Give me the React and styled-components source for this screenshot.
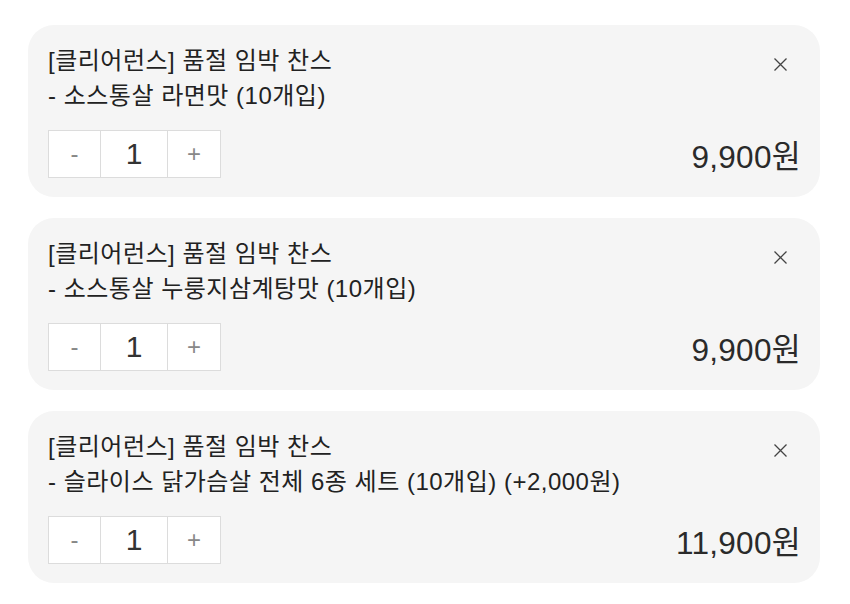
import React from "react";
import styled, { createGlobalStyle } from "styled-components";

const Global = createGlobalStyle`
  html, body { margin: 0; padding: 0; background: #fff; }
  body { font-family: "Noto Sans CJK KR", "Noto Sans", sans-serif; color: #222; }
`;

const List = styled.div`
  display: flex;
  flex-direction: column;
  gap: 21px;
  padding: 25px 30px 0 28px;
`;

const Card = styled.div`
  background: #f5f5f5;
  border-radius: 26px;
  height: 172px;
  box-sizing: border-box;
  padding: 18px 32px 19px 20px;
  display: flex;
  flex-direction: column;
  justify-content: space-between;
`;

const Top = styled.div`
  display: flex;
  justify-content: space-between;
  align-items: flex-start;
`;

const Title = styled.div`
  font-size: 24px;
  line-height: 35px;
  color: #222;
  letter-spacing: 0.5px;
  font-family: "Liberation Sans", "Noto Sans CJK KR", sans-serif;
`;

const Close = styled.button`
  border: none;
  background: none;
  padding: 0;
  margin-top: 13px;
  width: 16px;
  height: 16px;
  display: flex;
  align-items: center;
  justify-content: center;
`;

const Bottom = styled.div`
  display: flex;
  justify-content: space-between;
  align-items: center;
`;

const Qty = styled.div`
  display: flex;
  height: 48px;
  border: 1px solid #dcdcdc;
  background: #fff;
  box-sizing: border-box;
`;

const QtyBtn = styled.div`
  width: ${(p) => p.$w}px;
  display: flex;
  align-items: center;
  justify-content: center;
  font-size: ${(p) => (p.$num ? 30 : 24)}px;
  color: ${(p) => (p.$num ? "#333" : "#888")};
  font-family: "Liberation Sans", sans-serif;
  border-left: ${(p) => (p.$first ? "none" : "1px solid #dcdcdc")};
  box-sizing: border-box;
`;

const Price = styled.div`
  font-size: 31.5px;
  color: #2a2a2a;
  letter-spacing: 0.3px;
  font-family: "Liberation Sans", "Noto Sans CJK KR", sans-serif;
  margin-right: -13px;
`;

const XIcon = () => (
  <svg width="15" height="15" viewBox="0 0 15 15">
    <path d="M1.5 1.5 L13.5 13.5 M13.5 1.5 L1.5 13.5" stroke="#444" strokeWidth="1.3" fill="none" />
  </svg>
);

const items = [
  { name: "- 소스통살 라면맛 (10개입)", price: "9,900원" },
  { name: "- 소스통살 누룽지삼계탕맛 (10개입)", price: "9,900원" },
  { name: "- 슬라이스 닭가슴살 전체 6종 세트 (10개입) (+2,000원)", price: "11,900원" },
];

export default function App() {
  return (
    <>
      <Global />
      <List>
        {items.map((it, i) => (
          <Card key={i}>
            <Top>
              <Title>
                [클리어런스] 품절 임박 찬스
                <br />
                {it.name}
              </Title>
              <Close aria-label="삭제">
                <XIcon />
              </Close>
            </Top>
            <Bottom>
              <Qty>
                <QtyBtn $w={51} $first>-</QtyBtn>
                <QtyBtn $w={67} $num>1</QtyBtn>
                <QtyBtn $w={53}>+</QtyBtn>
              </Qty>
              <Price>{it.price}</Price>
            </Bottom>
          </Card>
        ))}
      </List>
    </>
  );
}
